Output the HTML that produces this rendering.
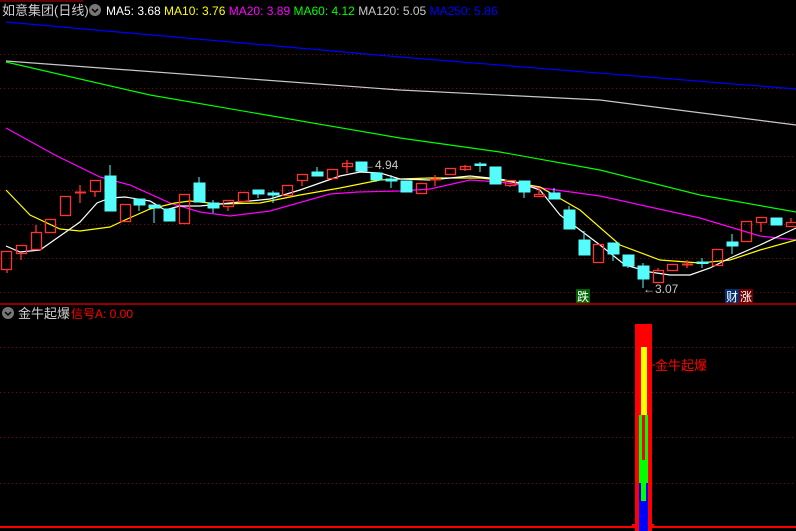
<!DOCTYPE html><html><head><meta charset="utf-8"><style>
html,body{margin:0;padding:0;background:#000;width:796px;height:531px;overflow:hidden}
svg{display:block}
text{font-family:"Liberation Sans","Noto Sans CJK SC",sans-serif}
</style></head><body>
<svg width="796" height="531" viewBox="0 0 796 531" xmlns="http://www.w3.org/2000/svg">
<rect width="796" height="531" fill="#000"/>
<line x1="0" y1="1" x2="83" y2="1" stroke="#c00000" stroke-width="1"/>
<g stroke="#8a0000" stroke-width="1" stroke-dasharray="1,3">
<line x1="0" y1="54.5" x2="796" y2="54.5"/><line x1="0" y1="88.5" x2="796" y2="88.5"/>
<line x1="0" y1="122.5" x2="796" y2="122.5"/><line x1="0" y1="156.5" x2="796" y2="156.5"/>
<line x1="0" y1="190.5" x2="796" y2="190.5"/><line x1="0" y1="224.5" x2="796" y2="224.5"/>
<line x1="0" y1="258.5" x2="796" y2="258.5"/><line x1="0" y1="292.5" x2="796" y2="292.5"/>
<line x1="0" y1="347.5" x2="796" y2="347.5"/><line x1="0" y1="392.5" x2="796" y2="392.5"/>
<line x1="0" y1="437.5" x2="796" y2="437.5"/><line x1="0" y1="483.5" x2="796" y2="483.5"/>
</g>
<line x1="0" y1="304" x2="796" y2="304" stroke="#c00000" stroke-width="1.5"/>
<g fill="none" stroke-width="1.2">
<polyline stroke="#0000ff" points="6,22 400,57 796,89"/>
<polyline stroke="#c8c8c8" points="6,61 400,90 600,100 796,125"/>
<polyline stroke="#00ff00" points="6,62 150,95 400,138 500,152 600,170 700,195 796,212"/>
<polyline stroke="#ff00ff" points="6,128 55,155 100,177 130,185 170,203 200,212 230,216 270,211 330,194 358,192 400,191 430,189 470,180 500,182 520,185 600,196 700,218 760,236 796,240"/>
<polyline stroke="#ffff00" points="6,190 30,215 60,229 80,231 110,227 125,220 150,209 175,203 190,201 220,204 260,203 300,195 340,188 380,180 400,179 430,178 480,178 500,180 540,187 580,210 620,245 660,260 700,263 730,260 760,250 796,240"/>
<polyline stroke="#ffffff" points="6,246 20,252 40,250 60,236 80,222 97,203 110,198 125,197 150,201 165,210 180,206 200,206 230,203 270,199 300,190 340,176 360,172 380,173 400,179 430,180 470,176 500,179 520,183 540,190 560,215 600,245 625,265 650,272 670,275 690,275 710,268 730,258 760,245 796,228"/>
</g>
<g stroke="#ff3232" fill="none" stroke-width="1.3">
<line x1="7" y1="269" x2="7" y2="273"/><rect x="1.5" y="251.5" width="10" height="18"/>
<line x1="21" y1="253" x2="21" y2="260"/><rect x="16.5" y="245.5" width="10" height="8"/>
<line x1="36" y1="225" x2="36" y2="232"/><rect x="31.5" y="232.5" width="10" height="17"/>
<rect x="45.5" y="219.5" width="10" height="13"/>
<rect x="60.5" y="196.5" width="10" height="19"/>
<line x1="80" y1="185" x2="80" y2="203"/><line x1="75" y1="192.5" x2="86" y2="192.5" stroke-width="2"/>
<line x1="95" y1="191" x2="95" y2="197"/><rect x="90.5" y="180.5" width="10" height="11"/>
<rect x="120.5" y="204.5" width="10" height="17"/>
<rect x="179.5" y="194.5" width="10" height="29"/>
<line x1="228" y1="206" x2="228" y2="211"/><rect x="223.5" y="200.5" width="10" height="6"/>
<rect x="238.5" y="192.5" width="10" height="9"/>
<rect x="282.5" y="185.5" width="10" height="10"/>
<line x1="302" y1="180" x2="302" y2="186"/><rect x="297.5" y="174.5" width="10" height="6"/>
<rect x="327.5" y="169.5" width="10" height="9"/>
<line x1="347" y1="160" x2="347" y2="173"/><rect x="342.5" y="163.5" width="10" height="3"/>
<rect x="416.5" y="183.5" width="10" height="10"/>
<line x1="435" y1="175" x2="435" y2="186"/><line x1="430" y1="179.5" x2="441" y2="179.5" stroke-width="2"/>
<rect x="445.5" y="168.5" width="10" height="6"/>
<line x1="465" y1="165" x2="465" y2="171"/><rect x="460.5" y="166.5" width="10" height="3"/>
<line x1="510" y1="185" x2="510" y2="187"/><rect x="505.5" y="180.5" width="10" height="5"/>
<line x1="539" y1="188" x2="539" y2="194"/><rect x="534.5" y="194.5" width="10" height="2"/>
<rect x="593.5" y="244.5" width="10" height="18"/>
<line x1="658" y1="268" x2="658" y2="270"/><rect x="653.5" y="270.5" width="10" height="12"/>
<rect x="667.5" y="264.5" width="10" height="6"/>
<line x1="687" y1="260" x2="687" y2="268"/><line x1="682" y1="264.5" x2="693" y2="264.5" stroke-width="2"/>
<rect x="712.5" y="249.5" width="10" height="16"/>
<rect x="741.5" y="221.5" width="10" height="20"/>
<line x1="761" y1="222" x2="761" y2="232"/><rect x="756.5" y="217.5" width="10" height="5"/>
<line x1="791" y1="218" x2="791" y2="222"/><rect x="786.5" y="222.5" width="11" height="4"/>
</g>
<g fill="#54fcfc" stroke="#54fcfc" stroke-width="1">
<line x1="110" y1="165" x2="110" y2="176"/><rect x="105" y="176" width="11" height="35"/>
<rect x="134" y="199" width="11" height="6"/><line x1="139" y1="205" x2="139" y2="211"/>
<rect x="149" y="205" width="11" height="3"/><line x1="154" y1="208" x2="154" y2="223"/>
<rect x="164" y="209" width="11" height="12"/>
<line x1="199" y1="177" x2="199" y2="183"/><rect x="194" y="183" width="11" height="19"/>
<line x1="213" y1="200" x2="213" y2="213"/><rect x="208" y="203" width="11" height="5"/>
<rect x="253" y="190" width="11" height="4"/><line x1="258" y1="194" x2="258" y2="198"/>
<line x1="273" y1="191" x2="273" y2="203"/><rect x="268" y="193" width="11" height="2"/>
<line x1="317" y1="167" x2="317" y2="172"/><rect x="312" y="172" width="11" height="4"/>
<rect x="356" y="162" width="11" height="9"/>
<rect x="371" y="173" width="11" height="7"/><line x1="376" y1="180" x2="376" y2="182"/>
<line x1="391" y1="175" x2="391" y2="188"/><rect x="386" y="179" width="11" height="2"/>
<rect x="401" y="181" width="11" height="11"/>
<line x1="480" y1="162" x2="480" y2="172"/><rect x="475" y="164" width="11" height="1.5"/>
<rect x="490" y="167" width="11" height="17"/>
<rect x="519" y="181" width="11" height="11"/><line x1="524" y1="192" x2="524" y2="198"/>
<line x1="554" y1="188" x2="554" y2="193"/><rect x="549" y="193" width="11" height="6"/>
<line x1="569" y1="206" x2="569" y2="210"/><rect x="564" y="210" width="11" height="19"/>
<line x1="584" y1="231" x2="584" y2="240"/><rect x="579" y="240" width="11" height="15"/>
<rect x="608" y="243" width="11" height="11"/><line x1="613" y1="254" x2="613" y2="261"/>
<rect x="623" y="255" width="11" height="11"/><line x1="628" y1="266" x2="628" y2="268"/>
<line x1="643" y1="263" x2="643" y2="288"/><rect x="638" y="266" width="11" height="13"/>
<line x1="702" y1="258" x2="702" y2="268"/><rect x="697" y="262" width="11" height="1.5"/>
<line x1="732" y1="234" x2="732" y2="254"/><rect x="727" y="242" width="11" height="4"/>
<rect x="771" y="218" width="11" height="7"/>
</g>
<text x="363" y="169" font-size="12" fill="#c8c8c8">←4.94</text>
<text x="643" y="293" font-size="12" fill="#c8c8c8">←3.07</text>
<rect x="576" y="289" width="14" height="14" fill="#006400"/><text x="577" y="301" font-size="12" fill="#fff">跌</text>
<rect x="725" y="289" width="14" height="14" fill="#003070"/><text x="726" y="301" font-size="12" fill="#fff">财</text>
<rect x="739" y="289" width="14" height="14" fill="#700000"/><text x="740" y="301" font-size="12" fill="#fff">涨</text>
<text x="2" y="15" font-size="13" fill="#d0d0d0">如意集团(日线)</text>
<circle cx="95" cy="10" r="6" fill="#777"/><path d="M92 9 L95 12 L98 9" stroke="#000" fill="none" stroke-width="1.5"/>
<text x="106" y="15" font-size="12"><tspan fill="#fff">MA5: 3.68 </tspan><tspan fill="#ffff00">MA10: 3.76 </tspan><tspan fill="#ff00ff">MA20: 3.89 </tspan><tspan fill="#00ff00">MA60: 4.12 </tspan><tspan fill="#c8c8c8">MA120: 5.05 </tspan><tspan fill="#0000ff">MA250: 5.86</tspan></text>
<circle cx="8" cy="313" r="6" fill="#777"/><path d="M5 312 L8 315 L11 312" stroke="#000" fill="none" stroke-width="1.5"/>
<text x="18" y="318" font-size="13" fill="#d0d0d0">金牛起爆</text>
<text x="71" y="318" font-size="12" fill="#ff0000">信号A: 0.00</text>
<rect x="0" y="526" width="796" height="2" fill="#ff0000"/>
<rect x="632" y="524" width="22" height="3" fill="#ff0000"/>
<rect x="635" y="324" width="17" height="207" fill="#ff0000"/>
<rect x="641" y="347" width="6" height="68" fill="#ffff00"/>
<rect x="639" y="415" width="9" height="68" fill="#00ff00"/>
<rect x="642" y="415" width="3" height="45" fill="#ff0000"/>
<rect x="639" y="483" width="9" height="48" fill="#0000ff"/>
<rect x="641" y="483" width="5" height="18" fill="#00ff00"/>
<line x1="647" y1="365" x2="655" y2="365" stroke="#ff0000"/>
<text x="655" y="370" font-size="13" fill="#ff0000">金牛起爆</text>
</svg>
</body></html>
